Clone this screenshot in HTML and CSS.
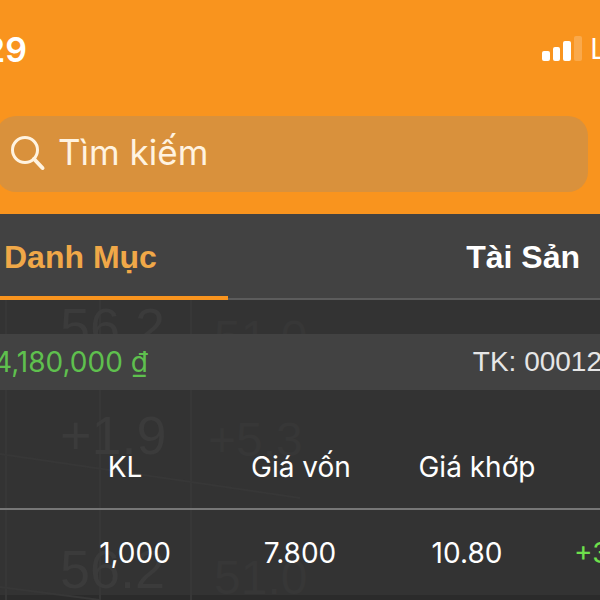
FILE: index.html
```
<!DOCTYPE html>
<html lang="vi">
<head>
    <meta charset="UTF-8">
    <meta name="viewport" content="width=device-width, initial-scale=1.0">
    <title>Danh Mục</title>
    <link rel="stylesheet" href="styles.css">
</head>
<body>

<header class="header">
    <div class="status">
        <span class="time">29</span>
        <div class="network">
            <svg class="signal" width="40" height="26" viewBox="0 0 40 26" fill="#fff" aria-hidden="true">
                <rect x="0" y="15" width="8" height="10" rx="2"/>
                <rect x="11" y="11" width="7" height="14" rx="2"/>
                <rect x="21" y="5" width="8" height="20" rx="2"/>
                <rect x="32" y="0" width="8" height="25" rx="2" opacity=".2"/>
            </svg>
            <span>L</span>
        </div>
    </div>
    <label class="search">
        <svg width="36" height="36" viewBox="0 0 36 36" fill="none" stroke="#fff3e0" stroke-linecap="round" aria-hidden="true">
            <circle cx="15" cy="14" r="12.5" stroke-width="3"/>
            <path d="M24 23L32.500 32" stroke-width="4"/>
        </svg>
        <input type="text" placeholder="Tìm kiếm" aria-label="Tìm kiếm">
    </label>
</header>

<nav class="tabs">
    <button class="tab active">Danh Mục</button>
    <button class="tab">Tài Sản</button>
</nav>

<main class="content">
    <!-- Số mờ phía sau bảng -->
    <svg class="backdrop" width="600" height="300" viewBox="0 0 600 300" aria-hidden="true">
        <g stroke="#373737" stroke-width="2">
            <path d="M6 0V300M100 0V300M191 0V300"/>
            <path d="M0 154L300 198M0 287L100 300"/>
        </g>
        <g class="digits">
            <text x="60" y="46">56.2</text>
            <text x="60" y="154">+1.9</text>
            <text x="60" y="288">56.2</text>
        </g>
        <g class="digits far">
            <text x="214" y="54">51.0</text>
            <text x="208" y="156">+5.3</text>
            <text x="214" y="294">51.0</text>
        </g>
    </svg>

    <div class="account">
        <span class="amount">4,180,000 ₫</span>
        <span class="number">TK: 00012</span>
    </div>

    <table class="stocks">
        <colgroup>
            <col class="edge">
            <col>
            <col>
            <col>
            <col class="edge">
        </colgroup>
        <thead>
            <tr>
                <td></td>
                <th>KL</th>
                <th>Giá vốn</th>
                <th>Giá khớp</th>
                <td></td>
            </tr>
        </thead>
        <tbody>
            <tr>
                <td></td>
                <td class="volume">1,000</td>
                <td>7.800</td>
                <td class="price">10.80</td>
                <td class="up">+3</td>
            </tr>
        </tbody>
    </table>
</main>

</body>
</html>
```
FILE: styles.css
```
* {
    box-sizing: border-box;
}
body {
    margin: 0;
    min-height: 100vh;
    background-color: #2b2b2b;
    color: white;
    font-family: Inter, "Noto Sans", sans-serif;
    font-size: 28px;
    overflow: hidden;
}

/* Thanh trên cùng */
.header {
    background-color: #f9941e;
    padding: 26px 12px 22px 0;
}
.status {
    display: flex;
    justify-content: space-between;
    align-items: center;
    height: 46px;
    margin-bottom: 44px;
}
.time {
    margin-left: -16px;
    font-size: 34px;
    font-weight: 600;
}
.network {
    display: flex;
    align-items: center;
    gap: 8px;
    margin-right: -18px;
}
.search {
    display: flex;
    align-items: center;
    gap: 12px;
    height: 76px;
    margin-left: -4px;
    padding-left: 14px;
    border-radius: 20px;
    background-color: #d9913c;
}
.search input {
    flex: 1;
    min-width: 0;
    padding: 0 0 4px;
    border: none;
    outline: none;
    background: none;
    color: #fff3e0;
    font-family: inherit;
    font-size: 35px;
}
.search input::placeholder {
    color: #fff3e0;
    opacity: 1;
}

/* Tab */
.tabs {
    display: flex;
    justify-content: space-between;
    height: 86px;
    background-color: #424242;
    box-shadow: inset 0 -2px #5c5c5c;
}
.tab {
    padding: 0 20px 0 0;
    border: none;
    background: none;
    color: white;
    font-family: "Liberation Sans", Arial, sans-serif;
    font-size: 32px;
    font-weight: bold;
    cursor: pointer;
}
.tab.active {
    width: 38%;
    padding: 4px 0 0 4px;
    border-bottom: 4px solid #f9941e;
    color: #f0a848;
    text-align: left;
}

/* Danh mục */
.content {
    position: relative;
    padding-top: 34px;
    background-color: #333;
}
.backdrop {
    position: absolute;
    top: 0;
    left: 0;
}
.digits {
    fill: #3b3b3b;
    font-family: "Liberation Sans Narrow", "Liberation Sans", sans-serif;
    font-size: 54px;
}
.far {
    fill: #373737;
    font-size: 48px;
}
.account {
    position: relative;
    display: flex;
    justify-content: space-between;
    align-items: center;
    height: 56px;
    background-color: #424242;
    white-space: nowrap;
}
.amount {
    margin-left: -6px;
    color: #5fc04e;
}
.number {
    margin-right: -2px;
    color: #e6e6e6;
    font-family: "Liberation Sans", Arial, sans-serif;
}
.stocks {
    position: relative;
    width: 100%;
    table-layout: fixed;
    border-collapse: collapse;
    text-align: center;
    white-space: nowrap;
}
.edge {
    width: 6%;
}
.stocks th,
.stocks td {
    padding: 0;
    font-weight: normal;
}
.stocks thead tr {
    height: 119px;
    border-bottom: 2px solid #777;
}
.stocks thead th {
    padding: 36px 0 0 2px;
}
.stocks tbody tr {
    height: 86px;
}
.stocks .volume {
    padding-left: 22px;
}
.stocks .price {
    padding-right: 18px;
}
.stocks .up {
    padding-left: 10px;
    color: #6ee04c;
    text-align: left;
}
```
